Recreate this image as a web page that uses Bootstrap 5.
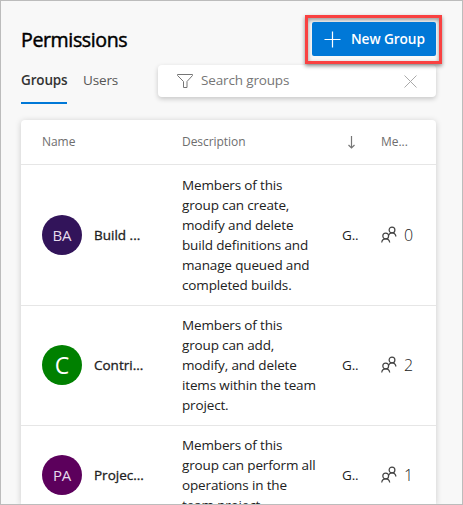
<!DOCTYPE html>
<html lang="en">
<head>
<meta charset="utf-8">
<title>Permissions</title>
<link href="https://cdn.jsdelivr.net/npm/bootstrap@5.3.0/dist/css/bootstrap.min.css" rel="stylesheet">
<style>
body{font-family:"Open Sans","Noto Sans",sans-serif;font-size:13.5px;line-height:20px;letter-spacing:-.15px;color:#212121;background:#f8f8f8}
.frame{width:463px;height:505px;border:1px solid #bcbcbc;padding:0 26px 0 20px}
.page-head{height:62px;padding-top:17px}
.title{font-size:19.6px;line-height:24px;font-weight:400;letter-spacing:-.4px;-webkit-text-stroke:.45px #000;color:#000;margin-top:10px}
.callout{width:137px;height:49px;border:3px solid #f94141;padding:4px 3px 5px 4px;margin:-3px -6px 0 0;box-shadow:0 2px 4px rgba(0,0,0,.45),inset 0 2px 4px rgba(0,0,0,.4);position:relative;z-index:2}
.btn-new{--bs-btn-bg:#0078d7;--bs-btn-border-color:#0078d7;width:124px;height:34px;font-size:13.7px;line-height:20px;font-weight:600;letter-spacing:-.1px;border-radius:2px;border:0;padding:0 0 0 12px}
.btn-label{margin-left:10px}
.tools{height:36px}
.tab{height:41px;padding:7px 0 0;line-height:20px;color:#555;border:0}
.tab.active{height:41px;border-bottom:2px solid #0078d7;color:#333;font-weight:600}
.tab-g{width:46px}
.search{width:278px;height:32px;margin-top:2px;border-radius:4px;box-shadow:0 2px 5px rgba(0,0,0,.2);padding:0 19px 0 18px;color:#767676}
.search-label{padding-bottom:2px;margin-left:7px}
.panel{width:415px;height:384px;margin-top:21px;border-radius:4px 4px 0 0;box-shadow:0 1px 6px rgba(0,0,0,.18);clip-path:inset(-6px -10px 0 -10px)}
.line{display:grid;grid-template-columns:52px 88px 160px 39px 23px 1fr;padding-left:21px;align-items:center}
.line-head{height:45px;border-bottom:1px solid #e6e6e6;color:#6e6e6e;font-size:12px;letter-spacing:-.05px}
.line-a{height:140px}
.line-b{height:120px;box-shadow:inset 0 1px #e6e6e6}
.line-c{height:100px;box-shadow:inset 0 1px #e6e6e6}
.avatar{width:40px;height:40px;color:#e6dcec;font-size:15px}
.av-1{background:#32145a}.av-2{background:#008000;font-size:23px;color:#fff}.av-3{background:#5c005c}
.nm{-webkit-text-stroke:.3px #212121;letter-spacing:0}
.num{font-size:16px;font-weight:300}
.s{display:inline-block;white-space:nowrap}
svg{display:block;fill:none}
</style>
</head>
<body class="overflow-hidden">
<main class="frame overflow-hidden">
  <header class="page-head d-flex justify-content-between">
    <h1 class="title mb-0">Permissions</h1>
    <div class="callout"><button class="btn btn-primary btn-new d-flex align-items-center">
      <svg width="17" height="17" stroke="#fff" stroke-width="1.2"><path d="M8.5 .5v16M.5 8.5h16"/></svg><span class="s btn-label">New Group</span></button></div>
  </header>
  <div class="tools d-flex justify-content-between">
    <nav class="d-flex">
      <a class="tab tab-g active text-decoration-none" href="#"><span class="s">Groups</span></a>
      <a class="tab text-decoration-none ms-3" href="#"><span class="s">Users</span></a>
    </nav>
    <div class="search bg-white d-flex align-items-center">
      <svg width="18" height="16" stroke="#767676"><path d="M1.5 1.5h15v1l-5.500 6v6H7.500v-6L1.500 2.500z"/></svg>
      <span class="s search-label">Search groups</span>
      <svg class="ms-auto" width="13" height="13" stroke="#aaa"><path d="M.5.5l12 12M12.5.5l-12 12"/></svg>
    </div>
  </div>
  <section class="panel bg-white">
    <div class="line line-head">
      <span>Name</span><span></span><span>Description</span>
      <svg class="ms-1" width="10" height="13" stroke="#767676" stroke-width="1.2"><path d="M5.500 0v12M2.500 9l3 3 3-3"/></svg><span>Me...</span>
    </div>
    <div class="line line-a">
      <span class="avatar av-1 rounded-circle d-flex align-items-center justify-content-center">BA</span><span class="nm">Build ...</span>
      <span>Members of this<br>group can create,<br>modify and delete<br>build definitions and<br>manage queued and<br>completed builds.</span><span>G..</span>
      <svg width="16" height="18" stroke="#444" stroke-width="1.2"><circle cx="11" cy="4" r="2.9"/><path d="M7.6 9.2C8.3 7.5 9.5 6.9 11 6.9c2 0 3.5 1.300 4 3.600"/><circle cx="4.700" cy="10" r="2.900"/><path d="M.7 16.500c.3-2.200 1.900-3.600 4-3.600s3.700 1.400 4 3.600"/></svg><span class="num">0</span>
    </div>
    <div class="line line-b">
      <span class="avatar av-2 rounded-circle d-flex align-items-center justify-content-center">C</span><span class="nm">Contri...</span>
      <span>Members of this<br>group can add,<br>modify, and delete<br>items within the team<br>project.</span><span>G..</span>
      <svg width="16" height="18" stroke="#444" stroke-width="1.2"><circle cx="11" cy="4" r="2.9"/><path d="M7.6 9.2C8.3 7.5 9.5 6.9 11 6.9c2 0 3.5 1.300 4 3.600"/><circle cx="4.700" cy="10" r="2.900"/><path d="M.7 16.500c.3-2.200 1.900-3.600 4-3.600s3.700 1.400 4 3.600"/></svg><span class="num">2</span>
    </div>
    <div class="line line-c">
      <span class="avatar av-3 rounded-circle d-flex align-items-center justify-content-center">PA</span><span class="nm">Projec...</span>
      <span>Members of this<br>group can perform all<br>operations in the<br>team project.</span><span>G..</span>
      <svg width="16" height="18" stroke="#444" stroke-width="1.2"><circle cx="11" cy="4" r="2.9"/><path d="M7.6 9.2C8.3 7.5 9.5 6.9 11 6.9c2 0 3.5 1.300 4 3.600"/><circle cx="4.700" cy="10" r="2.900"/><path d="M.7 16.500c.3-2.200 1.900-3.600 4-3.600s3.700 1.400 4 3.600"/></svg><span class="num">1</span>
    </div>
  </section>
</main>
<script src="https://cdn.jsdelivr.net/npm/bootstrap@5.3.0/dist/js/bootstrap.bundle.min.js"></script>
</body>
</html>
